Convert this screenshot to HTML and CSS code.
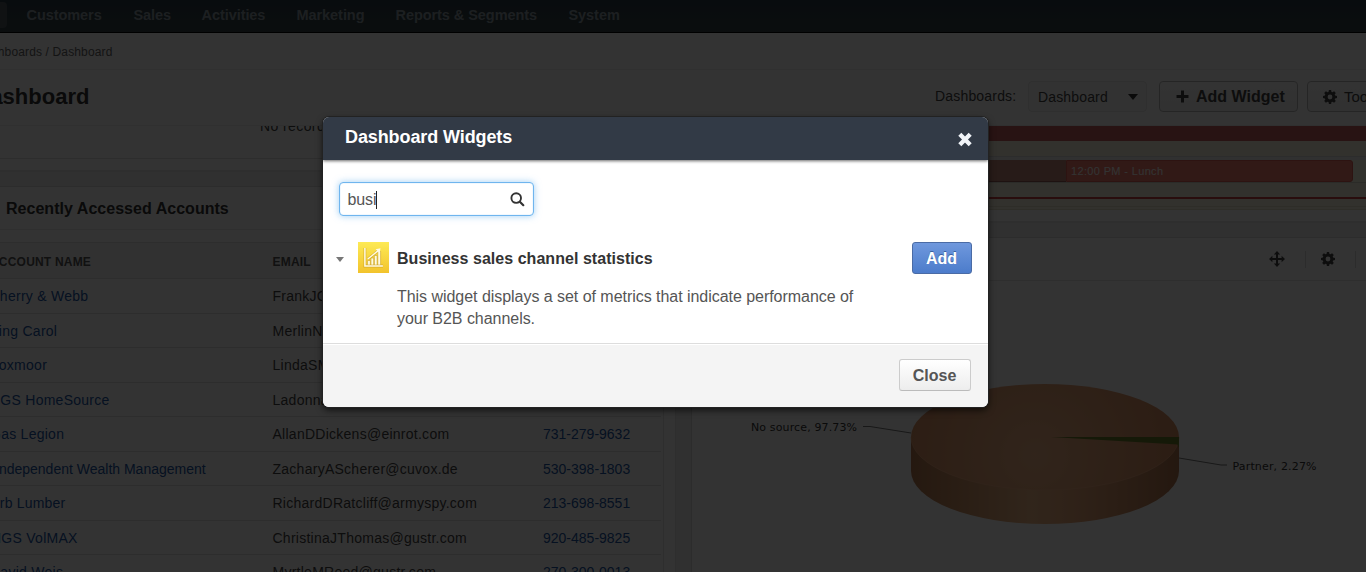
FILE: index.html
```html
<!DOCTYPE html>
<html lang="en">
<head>
<meta charset="utf-8">
<title>Dashboard</title>
<link rel="stylesheet" href="styles.css">
</head>
<body>
<div class="page">
  <nav class="nav">
    <span class="nav-current"></span>
    <a class="n1">Customers</a><a class="n2">Sales</a><a class="n3">Activities</a><a class="n4">Marketing</a><a class="n5">Reports &amp; Segments</a><a class="n6">System</a>
  </nav>
  <div class="crumbs"><span>Dashboards / Dashboard</span></div>
  <header class="head">
    <h1>Dashboard</h1>
    <div class="actions">
      <label>Dashboards:</label>
      <div class="select"><span>Dashboard</span><i class="caret"></i></div>
      <div class="btn add-widget"><svg width="13" height="13" viewBox="0 0 13 13"><path d="M5 .5h3V5h4.500v3H8v4.500H5V8H.5V5H5z"/></svg><span>Add Widget</span></div>
      <div class="btn tools"><svg width="14" height="14" viewBox="0 0 14 14"><use href="#gear"/></svg><span>Tools</span></div>
    </div>
  </header>
  <main class="columns">
    <section class="left">
      <div class="empty"><span>No records</span></div>
      <div class="end"></div>
      <div class="gap"></div>
      <h2>Recently Accessed Accounts</h2>
      <div class="tablebox">
        <div class="row thead"><span>ACCOUNT NAME</span><span>EMAIL</span><span></span></div>
        <div class="row"><a>Cherry &amp; Webb</a><span>FrankJG</span></div>
        <div class="row"><a>Ding Carol</a><span>MerlinN</span></div>
        <div class="row"><a>Foxmoor</a><span>LindaSM</span></div>
        <div class="row"><a>HGS HomeSource</a><span>LadonnaRay@gustr.com</span></div>
        <div class="row"><a>Gas Legion</a><span>AllanDDickens@einrot.com</span><a>731-279-9632</a></div>
        <div class="row wide"><a>Independent Wealth Management</a><span>ZacharyAScherer@cuvox.de</span><a>530-398-1803</a></div>
        <div class="row"><a>Herb Lumber</a><span>RichardDRatcliff@armyspy.com</span><a>213-698-8551</a></div>
        <div class="row"><a>HGS VolMAX</a><span>ChristinaJThomas@gustr.com</span><a>920-485-9825</a></div>
        <div class="row"><a>David Weis</a><span>MyrtleMReed@gustr.com</span><a>270-300-0013</a></div>
      </div>
    </section>
    <div class="gutter"></div>
    <section class="right">
      <div class="calendar">
        <div class="allday"></div>
        <div class="slot s1"></div>
        <div class="rule"></div>
        <div class="events"><div class="past"></div><div class="lunch">12:00 PM - Lunch</div></div>
        <div class="slot s2"></div>
        <div class="now"></div>
        <div class="slot s3"></div>
        <div class="rule2"></div>
      </div>
      <div class="end cal-end"></div>
      <div class="gap"></div>
      <div class="tools-row">
        <svg width="16" height="16" viewBox="0 0 16 16"><path d="M8 0l3.200 3.400H9V7h3.600V4.800L16 8l-3.400 3.200V9H9v3.600h2.200L8 16l-3.200-3.400H7V9H3.400v2.200L0 8l3.400-3.200V7H7V3.400H4.800z"/></svg>
        <i></i>
        <svg width="14" height="14" viewBox="0 0 14 14"><g id="gear"><path fill-rule="evenodd" d="M5.900 0h2.200l.4 1.900 1 .4 1.600-1.100 1.700 1.700-1.100 1.600.4 1 1.900.4v2.200l-1.900.4-.4 1 1.100 1.600-1.700 1.700-1.600-1.100-1 .4-.4 1.900H5.900l-.4-1.900-1-.4-1.600 1.100-1.700-1.700 1.100-1.600-.4-1L0 8.100V5.900l1.900-.4.4-1-1.100-1.600 1.700-1.700 1.600 1.100 1-.4zM7 4.600a2.400 2.400 0 100 4.800 2.400 2.400 0 000-4.800z"/></g></svg>
        <i></i>
      </div>
      <div class="chart">
        <svg width="674" height="291" viewBox="692 281 674 291">
          <defs>
            <radialGradient id="top" gradientUnits="userSpaceOnUse" cx="1035" cy="455" r="150"><stop offset="0" stop-color="#f2b688"/><stop offset="1" stop-color="#d98d60"/></radialGradient>
            <linearGradient id="side"><stop offset="0" stop-color="#b87a50"/><stop offset=".45" stop-color="#f2b987"/><stop offset=".6" stop-color="#eba97a"/><stop offset="1" stop-color="#b4764f"/></linearGradient>
          </defs>
          <path fill="url(#side)" d="M911 437v34a134 53 0 00268 0v-34z"/>
          <ellipse cx="1045" cy="437" rx="134" ry="53" fill="url(#top)"/>
          <path d="M911 437a134 53 0 00268 0" fill="none" stroke="#f5b488" stroke-width=".6"/>
          <path fill="#77812e" d="M1179 437v11l-2-4z"/>
          <path fill="#6b7c2c" d="M1051 437L1179 437q0 4-1.200 7.500z"/>
          <path class="lead" d="M863 426.500h7l41 6.500M1179 458l42 7h6"/>
          <text x="751" y="430.500" textLength="106">No source, 97.73%</text>
          <text x="1232.500" y="469.500" textLength="84">Partner, 2.27%</text>
        </svg>
      </div>
    </section>
  </main>
</div>
<div class="overlay"></div>
<div class="modal">
  <div class="modal-head"><strong>Dashboard Widgets</strong>
    <svg width="16" height="15" viewBox="0 0 16 15"><path d="M2.800 2.300l10.400 10.400M13.200 2.300L2.800 12.700" stroke="#f1f4f8" stroke-width="4.300" fill="none"/></svg>
  </div>
  <div class="modal-body">
    <div class="search"><span>busi</span><i class="cursor"></i><svg width="15" height="15" viewBox="0 0 15 15"><circle cx="6.200" cy="6.100" r="4.800" fill="none" stroke="#333" stroke-width="1.900"/><path d="M9.800 9.700l3.500 3.500" stroke="#333" stroke-width="2.200" stroke-linecap="round"/></svg></div>
    <div class="widget">
      <i class="caret small"></i>
      <svg class="logo" width="31" height="31" viewBox="0 0 31 31">
        <defs><linearGradient id="y" x2="0" y2="1"><stop offset="0" stop-color="#fdea56"/><stop offset="1" stop-color="#f2c32c"/></linearGradient></defs>
        <rect width="31" height="31" fill="url(#y)"/>
        <g fill="none" stroke="#c59a20" stroke-width="2.800" opacity=".6"><path d="M6.900 6v18h18"/><path d="M10 17l5-4 6-5"/></g>
        <g fill="#fffbe0" stroke="#cda528" stroke-width=".6"><path d="M9.600 18.500h2.700V23H9.600zM13 16h2.700v7H13zM16.400 13.500h2.700V23h-2.700zM19.800 9.500h2.800V23h-2.800z"/></g>
        <path d="M6.900 6v18h18M9.800 17l5-4 5.700-4.700" fill="none" stroke="#fffbe5" stroke-width="1.500"/><path d="M17.600 7.200l4.900-.9-.8 4.900z" fill="#fffbe5"/>
      </svg>
      <div class="desc"><b>Business sales channel statistics</b><p>This widget displays a set of metrics that indicate performance of<br><span>your B2B channels.</span></p></div>
      <div class="add">Add</div>
    </div>
  </div>
  <div class="modal-foot"><div class="close">Close</div></div>
</div>
</body>
</html>
```
FILE: styles.css
```css
* { box-sizing: border-box; }
body { margin: 0; width: 1366px; height: 572px; overflow: hidden; position: relative; background: #fff; color: #444; font: 14px/20px "Liberation Sans", Arial, sans-serif; }
h1, h2, p { margin: 0; }
i { display: block; }
.page { width: 1366px; height: 572px; overflow: hidden; display: flex; flex-direction: column; }
.nav { height: 33px; flex: none; display: flex; align-items: center; padding-bottom: 3px; background: linear-gradient(#2a3d45, #374348); border-bottom: 1px solid #000; color: #8e9ca4; font-size: 14.500px; font-weight: bold; letter-spacing: -.06px; }
.nav-current { width: 7px; height: 26px; background: #4f5960; border-radius: 0 4px 4px 0; margin-right: 19.500px; }
.nav a { flex: none; white-space: nowrap; }
.n1 { width: 107px; } .n2 { width: 68px; } .n3 { width: 95px; } .n4 { width: 99px; } .n5 { width: 173px; }
.crumbs { height: 37px; flex: none; border-bottom: 1px solid #f0f0f0; padding-top: 9px; margin-left: -24px; font-size: 12px; color: #666; letter-spacing: .14px; }
.head { height: 56px; flex: none; display: flex; justify-content: space-between; border-bottom: 1px solid #eee; }
h1 { font-size: 22px; line-height: 54px; margin-left: -25.500px; color: #333; }
.actions { width: 431px; flex: none; display: flex; padding-top: 11px; white-space: nowrap; overflow: hidden; }
label { width: 93px; flex: none; line-height: 31px; color: #444; letter-spacing: .18px; }
.select, .btn { height: 31px; flex: none; border: 1px solid #d2d2d2; border-radius: 4px; display: flex; align-items: center; background: linear-gradient(#fff, #f2f2f2); }
.select { width: 119px; padding: 0 8px 0 9px; justify-content: space-between; background: #fafafa; border-color: #e8e8e8; letter-spacing: .15px; }
.caret { width: 0; height: 0; border: 5.500px solid transparent; border-top: 6px solid #333; border-bottom: 0; }
.add-widget { width: 139px; margin-left: 12px; padding-left: 16px; gap: 7px; font-size: 16px; font-weight: bold; border-color: #bbb; }
.tools { width: 90px; margin-left: 9px; padding-left: 15px; gap: 7px; font-size: 15px; border-color: #bbb; }
.btn svg { fill: #444; flex: none; }
.columns { flex: 1; display: flex; min-height: 0; }
.left { width: 676px; flex: none; border-right: 1px solid #e4e4e4; }
.empty { height: 33px; border-bottom: 1px solid #e2e2e2; padding-left: 260px; overflow: hidden; white-space: nowrap; }
.empty span { display: block; margin-top: -10px; letter-spacing: .4px; }
.end { height: 13px; border-bottom: 2px solid #e4e4e4; }
.gap { height: 15px; background: #f0f0f0; border-bottom: 1px solid #ddd; }
h2 { height: 43px; line-height: 44px; font-size: 16px; letter-spacing: .03px; padding-left: 6px; color: #333; border-bottom: 1px solid #e8e8e8; }
.tablebox { width: 664px; height: 343px; margin-top: 12px; padding-right: 2px; border-right: 1px solid #e4e4e4; overflow: hidden; }
.row { height: 34.500px; display: grid; grid-template-columns: 289.500px 271px 1fr; align-items: center; margin-left: -17px; padding-top: 1px; border-bottom: 1px solid #e2e2e2; white-space: nowrap; letter-spacing: .26px; }
.row > :first-child { padding-left: 7px; }
.row a { color: #2256a5; }
.row > :nth-child(3) { letter-spacing: 0; margin-left: -.5px; }
.row.wide > :first-child { padding-left: 12px; letter-spacing: 0; }
.row:nth-child(2) > :first-child { padding-left: 6.500px; }
.row:nth-child(3) > :first-child { padding-left: 5.500px; }
.row:nth-child(8) > :first-child { padding-left: 0; }
.row:nth-child(9) > :first-child { padding-left: 8px; }
.row:nth-child(8) > :first-child { margin-left: -1.500px; letter-spacing: .2px; }
.row.thead { height: 37px; padding-top: 2px; border-top: 1px solid #e2e2e2; background: #f3f3f3; color: #555; font-size: 12px; font-weight: bold; letter-spacing: .2px; }
.gutter { width: 16px; flex: none; background: #f0f0f0; border-right: 1px solid #ddd; }
.right { width: 674px; flex: none; }
.calendar { height: 84px; background: #fbf6df; }
.allday { height: 15px; background: #c95e5e; }
.s1 { height: 15px; }
.rule { height: 4px; background: #efefef; border-top: 1px solid #ddd; }
.events { height: 23px; display: flex; background: #f7f8df; border-bottom: 1px solid #d8d4c6; }
.past { width: 374px; background: #c2857b; border-bottom: 1px solid #965c54; }
.lunch { width: 287px; background: #f27f70; border: 1px solid #df5f54; border-radius: 0 3px 3px 0; color: #fff; font-size: 11px; line-height: 21px; padding-left: 4px; letter-spacing: .35px; }
.s2 { height: 14px; }
.now { height: 2px; background: #ce4444; }
.s3 { height: 7px; }
.rule2 { height: 4px; border-top: 1px solid #e4dfc9; border-bottom: 1px solid #e4dfc9; }
.tools-row { height: 43px; border-bottom: 1px solid #e5e5e5; display: flex; align-items: center; padding-left: 577px; gap: 20px; fill: #444; }
.tools-row svg { flex: none; }
.tools-row i { width: 1px; height: 17px; background: #ddd; flex: none; margin-right: -5px; }
.chart { height: 291px; }
.chart svg { display: block; }
.chart text { font: 11px "DejaVu Sans", sans-serif; fill: #333; }
.lead { fill: none; stroke: #777; stroke-width: 1; }
.overlay { position: absolute; inset: 0; background: rgba(0, 0, 0, .8); }
.modal { position: absolute; left: 322.500px; top: 117px; width: 665px; height: 290px; border-radius: 6px; background: #fff; box-shadow: 0 0 0 1px #222, 0 3px 7px rgba(0, 0, 0, .7); overflow: hidden; display: flex; flex-direction: column; }
.modal-head { height: 43px; flex: none; background: #323a46; display: flex; justify-content: space-between; padding: 0 15px 0 22.500px; color: #fff; box-shadow: 0 1px 3px rgba(0, 0, 0, .6); font-size: 18px; line-height: 41px; letter-spacing: -.1px; }
.modal-head svg { margin-top: 15px; }
.modal-body { flex: 1; padding: 22px 16px 0 12px; }
.search { width: 195px; height: 34px; margin-left: 4px; border: 1px solid #6fb5ee; border-radius: 4px; box-shadow: 0 0 7px rgba(82, 168, 236, .55), inset 0 0 1px #6fb5ee; padding: 1px 8px 0 8px; display: flex; align-items: center; font-size: 16px; color: #555; }
.search svg { margin-left: auto; margin-top: -1px; }
.search span { letter-spacing: -.1px; }
.cursor { width: 1px; height: 18px; background: #222; }
.widget { display: flex; margin-top: 26px; align-items: flex-start; }
.small { border-width: 5px 4px 0; border-top-color: #777; margin: 15px 14px 0 1px; }
.logo { flex: none; }
.desc { margin-left: 8.500px; white-space: nowrap; }
.desc b { display: block; font-size: 16px; line-height: 33px; color: #333; letter-spacing: .04px; }
.desc p { font-size: 16px; line-height: 22px; color: #555; margin-top: 11px; letter-spacing: -.04px; }
.add, .close { height: 32px; display: flex; align-items: center; justify-content: center; font-size: 16px; font-weight: bold; border-radius: 3px; padding-top: 1px; }
.add { width: 60px; margin-left: auto; border: 1px solid #4a6ba5; background: linear-gradient(#6f98dd, #4c7ccb); color: #fff; text-shadow: 0 -1px 0 #395f9e; }
.modal-foot { height: 64px; flex: none; background: #f4f4f4; border-top: 1px solid #ddd; box-shadow: inset 0 1px 0 #fff; padding: 15px 17px 0 0; }
.close { width: 72px; margin-left: auto; border: 1px solid #ccc; border-bottom-color: #bbb; background: linear-gradient(#fff, #ededed); color: #555; }
```
